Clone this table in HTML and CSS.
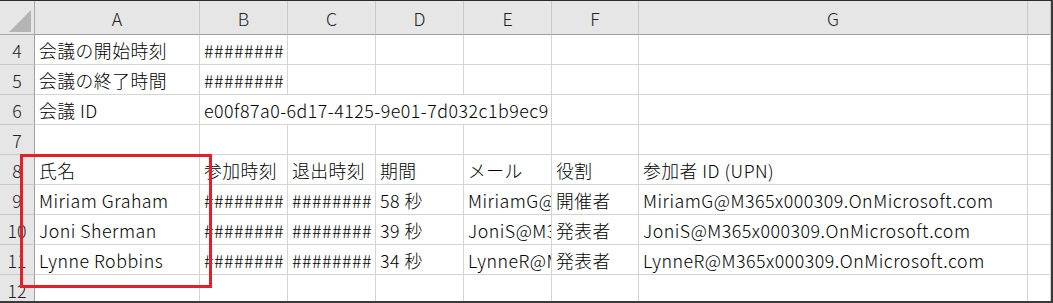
FILE: index.html
```html
<!DOCTYPE html>
<html lang="ja">
<head>
<meta charset="utf-8">
<title>Sheet</title>
<link rel="stylesheet" href="styles.css">
</head>
<body>
<div class="frame">
  <div class="sheet">
    <div class="corner"><span class="tri"></span></div>
    <div class="ch">A</div><div class="ch">B</div><div class="ch">C</div><div class="ch">D</div><div class="ch">E</div><div class="ch">F</div><div class="ch">G</div><div class="ch"></div>

    <div class="rh">4</div><div class="c">会議の開始時刻</div><div class="c">########</div><div class="c"></div><div class="c"></div><div class="c"></div><div class="c"></div><div class="c"></div><div class="c"></div>
    <div class="rh">5</div><div class="c">会議の終了時間</div><div class="c">########</div><div class="c"></div><div class="c"></div><div class="c"></div><div class="c"></div><div class="c"></div><div class="c"></div>
    <div class="rh">6</div><div class="c">会議 ID</div><div class="c span4">e00f87a0-6d17-4125-9e01-7d032c1b9ec9</div><div class="c"></div><div class="c"></div><div class="c"></div>
    <div class="rh">7</div><div class="c"></div><div class="c"></div><div class="c"></div><div class="c"></div><div class="c"></div><div class="c"></div><div class="c"></div><div class="c"></div>
    <div class="rh">8</div><div class="c">氏名</div><div class="c">参加時刻</div><div class="c">退出時刻</div><div class="c">期間</div><div class="c">メール</div><div class="c">役割</div><div class="c">参加者 ID (UPN)</div><div class="c"></div>
    <div class="rh">9</div><div class="c">Miriam Graham</div><div class="c">########</div><div class="c">########</div><div class="c">58 秒</div><div class="c">MiriamG@M365x000309.OnMicrosoft.com</div><div class="c">開催者</div><div class="c">MiriamG@M365x000309.OnMicrosoft.com</div><div class="c"></div>
    <div class="rh">10</div><div class="c">Joni Sherman</div><div class="c">########</div><div class="c">########</div><div class="c">39 秒</div><div class="c">JoniS@M365x000309.OnMicrosoft.com</div><div class="c">発表者</div><div class="c">JoniS@M365x000309.OnMicrosoft.com</div><div class="c"></div>
    <div class="rh">11</div><div class="c">Lynne Robbins</div><div class="c">########</div><div class="c">########</div><div class="c">34 秒</div><div class="c">LynneR@M365x000309.OnMicrosoft.com</div><div class="c">発表者</div><div class="c">LynneR@M365x000309.OnMicrosoft.com</div><div class="c"></div>
    <div class="rh">12</div><div class="c"></div><div class="c"></div><div class="c"></div><div class="c"></div><div class="c"></div><div class="c"></div><div class="c"></div><div class="c"></div>
  </div>
  <div class="highlight"></div>
</div>
</body>
</html>
```

FILE: styles.css
```css
html, body {
  margin: 0;
  padding: 0;
  background: #ffffff;
}

.frame {
  position: relative;
  width: 1051px;
  height: 300px;
  border-top: 1px solid #2b2b2b;
  border-right: 2px solid #3a3a3a;
  border-bottom: 2px solid #3a3a3a;
  overflow: hidden;
  background: #ffffff;
}

.sheet {
  display: grid;
  grid-template-columns: 35px 165px 88px 88px 88px 88px 87px 389px 23px;
  grid-template-rows: 34px repeat(9, 30px);
  font-family: "Noto Sans CJK JP", "Noto Sans", sans-serif;
  font-size: 17.8px;
  font-weight: 300;
  color: #000000;
}

.corner {
  background: #e6e6e6;
  border-right: 1px solid #a8a8a8;
  border-bottom: 1px solid #a8a8a8;
  position: relative;
}

.tri {
  position: absolute;
  left: 9px;
  top: 9px;
  width: 22px;
  height: 22px;
  background: #b4b4b4;
  clip-path: polygon(100% 0, 100% 100%, 0 100%);
}

.ch {
  background: #e6e6e6;
  border-right: 1px solid #c8c8c8;
  border-bottom: 1px solid #a0a0a0;
  display: flex;
  align-items: center;
  justify-content: center;
  color: #222222;
  padding-top: 1px;
}

.rh {
  background: #e6e6e6;
  border-right: 1px solid #a0a0a0;
  border-bottom: 1px solid #c8c8c8;
  display: flex;
  align-items: center;
  justify-content: center;
  color: #222222;
}

.c {
  border-right: 1px solid #d4d4d4;
  border-bottom: 1px solid #d4d4d4;
  display: flex;
  align-items: center;
  padding: 0 0 0 4px;
  white-space: nowrap;
  overflow: hidden;
  min-width: 0;
  letter-spacing: 0.5px;
}

.span4 {
  grid-column: span 4;
}

.highlight {
  position: absolute;
  left: 20px;
  top: 153px;
  width: 186px;
  height: 128px;
  border: 3px solid #e3202a;
}
```
